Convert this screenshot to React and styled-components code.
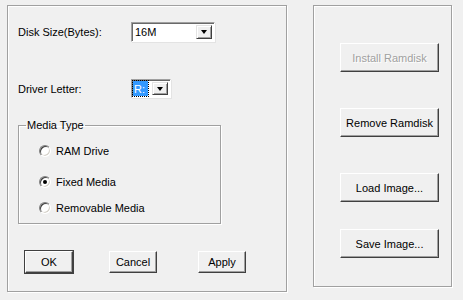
import React from 'react';
import styled, { createGlobalStyle } from 'styled-components';

const Global = createGlobalStyle`
    html, body {
        margin:0;
        padding:0;
        background:#f0f0f0;
    }
    body {
        font-family:"Liberation Sans", Arial, sans-serif;
        font-size:11px;
        color:#000;
    }
`;

const Window = styled.div`
    display:flex;
    align-items:flex-start;
    width:463px;
    height:300px;
    padding:5px 0 0 7px;
    box-sizing:border-box;
    background:#f0f0f0;
`;

const Panel = styled.div`
    box-sizing:border-box;
    width:${props => props.w}px;
    height:${props => props.h}px;
    margin-left:${props => props.ml || 0}px;
    border:1px solid #a0a0a0;
    box-shadow:1px 1px 0 #fff, inset 1px 1px 0 #fff;
    display:flex;
    flex-direction:column;
`;

const LeftPanel = styled(Panel)`
    padding:16px 0 0 10px;
`;

const RightPanel = styled(Panel)`
    padding:37px 0 0 26px;
`;

const Row = styled.div`
    display:flex;
    align-items:center;
    margin-top:${props => props.mt || 0}px;
`;

const Label = styled.span`
    width:113px;
`;

const Combo = styled.div`
    box-sizing:border-box;
    display:flex;
    align-items:center;
    width:${props => props.w}px;
    height:${props => props.h}px;
    background:#fff;
    border-top:1px solid #a0a0a0;
    border-left:1px solid #a0a0a0;
    border-right:1px solid #fff;
    border-bottom:1px solid #fff;
    box-shadow:inset 1px 1px 0 #696969, 1px 1px 0 #e3e3e3;
    padding:2px;
`;

const ComboText = styled.span`
    flex:1;
    padding-left:1px;
`;

const Selected = styled.span`
    flex:0 0 auto;
    box-sizing:border-box;
    width:15px;
    height:15px;
    display:flex;
    align-items:center;
    background:#3399ff;
    color:#fff;
    padding-left:1px;
    margin:0 auto 0 -1px;
    outline:1px dotted #000;
`;

const DropButton = styled.div`
    box-sizing:border-box;
    width:16px;
    height:100%;
    display:flex;
    align-items:center;
    justify-content:center;
    background:#f0f0f0;
    border-top:1px solid #e3e3e3;
    border-left:1px solid #e3e3e3;
    border-right:1px solid #404040;
    border-bottom:1px solid #404040;
    box-shadow:inset 1px 1px 0 #fff, inset -1px -1px 0 #a0a0a0;
`;

const Arrow = styled.span`
    width:0;
    height:0;
    border-left:3.5px solid transparent;
    border-right:3.5px solid transparent;
    border-top:4px solid #000;
`;

const Group = styled.fieldset`
    box-sizing:border-box;
    width:203px;
    height:105px;
    margin:21px 0 0 0;
    padding:0 0 0 20px;
    border:1px solid #a0a0a0;
    box-shadow:1px 1px 0 #fff, inset 1px 1px 0 #fff;
`;

const Legend = styled.legend`
    padding:0 1px;
    margin-left:-13px;
    line-height:13px;
`;

const RadioRow = styled.label`
    display:flex;
    align-items:center;
    height:16px;
    margin-top:${props => props.mt}px;
`;

const RadioCircle = styled.span`
    box-sizing:border-box;
    width:12px;
    height:12px;
    border-radius:50%;
    background:#fff;
    border:1px solid;
    border-color:#808080 #fff #fff #808080;
    box-shadow:inset 1px 1px 0 #404040, inset -1px -1px 0 #d4d0c8;
    margin-right:5px;
    display:flex;
    align-items:center;
    justify-content:center;
`;

const Dot = styled.span`
    width:4px;
    height:4px;
    border-radius:50%;
    background:#000;
`;

const ButtonRow = styled.div`
    display:flex;
    margin-top:27px;
    padding-left:7px;
`;

const Button = styled.div`
    box-sizing:border-box;
    width:${props => props.w}px;
    height:${props => props.h}px;
    margin-left:${props => props.ml || 0}px;
    margin-top:${props => props.mt || 0}px;
    display:flex;
    align-items:center;
    justify-content:center;
    background:#f0f0f0;
    color:${props => props.disabled ? '#a0a0a0' : '#000'};
    text-shadow:${props => props.disabled ? '1px 1px 0 #fff' : 'none'};
    border-top:1px solid #fff;
    border-left:1px solid #fff;
    border-right:1px solid #404040;
    border-bottom:1px solid #404040;
    box-shadow:inset -1px -1px 0 #a0a0a0${props => props.primary ? ', 0 0 0 1px #404040' : ''};
`;

const radios = [
    { label: 'RAM Drive', mt: 11, checked: false },
    { label: 'Fixed Media', mt: 15, checked: true },
    { label: 'Removable Media', mt: 10, checked: false },
];

const sideButtons = [
    { label: 'Install Ramdisk', mt: 0, disabled: true },
    { label: 'Remove Ramdisk', mt: 36 },
    { label: 'Load Image...', mt: 36 },
    { label: 'Save Image...', mt: 27 },
];

export default function App() {
    return (
        <>
            <Global />
            <Window>
                <LeftPanel w={280} h={287}>
                    <Row>
                        <Label>Disk Size(Bytes):</Label>
                        <Combo w={84} h={20}>
                            <ComboText>16M</ComboText>
                            <DropButton><Arrow /></DropButton>
                        </Combo>
                    </Row>
                    <Row mt={37}>
                        <Label>Driver Letter:</Label>
                        <Combo w={40} h={19}>
                            <Selected>R:</Selected>
                            <DropButton><Arrow /></DropButton>
                        </Combo>
                    </Row>
                    <Group>
                        <Legend>Media Type</Legend>
                        {radios.map(r => (
                            <RadioRow key={r.label} mt={r.mt}>
                                <RadioCircle>{r.checked && <Dot />}</RadioCircle>
                                {r.label}
                            </RadioRow>
                        ))}
                    </Group>
                    <ButtonRow>
                        <Button w={48} h={22} primary>OK</Button>
                        <Button w={48} h={22} ml={36}>Cancel</Button>
                        <Button w={48} h={22} ml={41}>Apply</Button>
                    </ButtonRow>
                </LeftPanel>
                <RightPanel w={139} h={282} ml={26}>
                    {sideButtons.map(b => (
                        <Button key={b.label} w={99} h={29} mt={b.mt} disabled={b.disabled}>
                            {b.label}
                        </Button>
                    ))}
                </RightPanel>
            </Window>
        </>
    );
}
